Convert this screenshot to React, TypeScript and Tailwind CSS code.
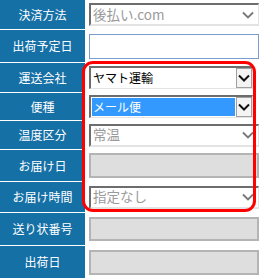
import React from "react";

const font = { fontFamily: '"Noto Sans CJK JP", "Noto Sans", sans-serif' };

function Chevron({ dark }: { dark?: boolean }) {
  return (
    <svg width="12" height="8" viewBox="0 0 12 8" className="shrink-0">
      <polyline
        points="1,1.5 6,6.5 11,1.5"
        fill="none"
        stroke={dark ? "#111111" : "#777777"}
        strokeWidth={dark ? 2 : 1.8}
      />
    </svg>
  );
}

function Row({
  label,
  h,
  last,
  children,
}: {
  label: string;
  h: string;
  last?: boolean;
  children: React.ReactNode;
}) {
  return (
    <div className={`flex ${h} ${last ? "" : "border-b border-white"}`}>
      <div className="flex w-[85px] shrink-0 items-center justify-center bg-[#1570a6] text-[12px] text-white">
        {label}
      </div>
      <div className="flex flex-1 items-center pl-[4px]">{children}</div>
    </div>
  );
}

function DisabledSelect({ text }: { text: string }) {
  return (
    <div className="flex h-[23px] w-[170px] items-center border-l-2 border-t-2 border-r border-b-2 border-l-[#6d6d6d] border-t-[#6d6d6d] border-r-[#e3e3e3] border-b-[#e3e3e3] bg-white pl-[2px] pr-[4px]">
      <span className="flex-1 text-[13.5px] leading-none text-[#9a9a9a]">{text}</span>
      <Chevron />
    </div>
  );
}

function EnabledSelect({ text, selected }: { text: string; selected?: boolean }) {
  return (
    <div className="flex h-[23px] w-[164px] items-stretch border-l-2 border-t-2 border-r border-b border-l-[#6d6d6d] border-t-[#6d6d6d] border-r-[#e3e3e3] border-b-[#e3e3e3] bg-white">
      <div className="flex flex-1 items-center py-[1px] pl-[1px] pr-[1px]">
        <span
          className={`flex h-full w-full items-center pl-[1px] text-[12px] leading-none ${
            selected ? "bg-[#3399ff] text-white" : "text-black"
          }`}
        >
          {text}
        </span>
      </div>
      <div className="flex w-[16px] items-center justify-center border border-[#a0a0a0] bg-[#f4f4f4]">
        <Chevron dark />
      </div>
    </div>
  );
}

export default function App() {
  return (
    <div className="relative h-[278px] w-[261px] overflow-hidden bg-white" style={font}>
      <Row label="決済方法" h="h-[30px]">
        <DisabledSelect text="後払い.com" />
      </Row>
      <Row label="出荷予定日" h="h-[33px]">
        <div className="h-[25px] w-[170px] border border-[#7a9ccf] bg-white" />
      </Row>
      <Row label="運送会社" h="h-[30px]">
        <EnabledSelect text="ヤマト運輸" />
      </Row>
      <Row label="便種" h="h-[28px]">
        <EnabledSelect text="メール便" selected />
      </Row>
      <Row label="温度区分" h="h-[29px]">
        <DisabledSelect text="常温" />
      </Row>
      <Row label="お届け日" h="h-[32px]">
        <div className="h-[25px] w-[170px] border-2 border-[#b4b4b4] bg-[#dedede]" />
      </Row>
      <Row label="お届け時間" h="h-[31px]">
        <DisabledSelect text="指定なし" />
      </Row>
      <Row label="送り状番号" h="h-[33px]">
        <div className="h-[24px] w-[170px] border-2 border-[#b4b4b4] bg-[#dedede]" />
      </Row>
      <Row label="出荷日" h="h-[32px]" last>
        <div className="h-[25px] w-[170px] border-2 border-[#b4b4b4] bg-[#dedede]" />
      </Row>

      {/* red annotation frame */}
      <div className="pointer-events-none absolute left-[82px] top-[61px] h-[151px] w-[174px] rounded-[11px] border-[3px] border-[#ff0000]" />
    </div>
  );
}
